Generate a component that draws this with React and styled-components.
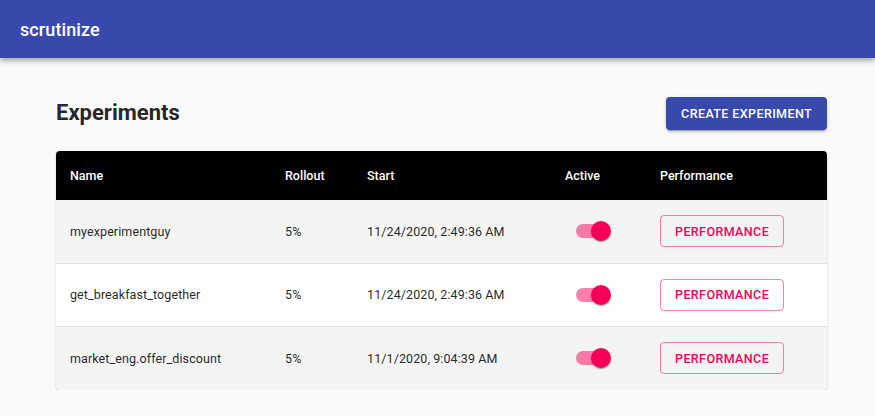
import React from 'react';
import styled, { createGlobalStyle } from 'styled-components';

const GlobalStyle = createGlobalStyle`
  body {
    margin: 0;
    background: #fafafa;
    font-family: Roboto, "Liberation Sans", sans-serif;
    color: rgba(0, 0, 0, 0.87);
  }
`;

const AppBar = styled.header`
  height: 58px;
  background: #3949ab;
  color: #fff;
  display: flex;
  align-items: center;
  padding: 0 20px;
  box-shadow: 0 2px 4px -1px rgba(0,0,0,0.2), 0 4px 5px 0 rgba(0,0,0,0.14), 0 1px 10px 0 rgba(0,0,0,0.12);
  position: relative;
  z-index: 1;
`;

const Brand = styled.div`
  font-size: 18px;
  font-weight: 500;
  letter-spacing: 0.1px;
  padding-top: 1px;
`;

const Main = styled.main`
  width: 771px;
  margin-left: 56px;
  padding-top: 39px;
`;

const TitleRow = styled.div`
  display: flex;
  justify-content: space-between;
  align-items: center;
  margin-bottom: 21px;
`;

const Title = styled.h1`
  margin: 0 0 2px;
  font-size: 22px;
  font-weight: 700;
  color: rgba(0,0,0,0.87);
`;

const Primary = styled.button`
  height: 33px;
  padding: 0 15px;
  border: none;
  border-radius: 4px;
  background: #3949ab;
  color: #fff;
  font-family: inherit;
  font-size: 12.5px;
  font-weight: 500;
  letter-spacing: 0.4px;
  text-transform: uppercase;
  box-shadow: 0 3px 1px -2px rgba(0,0,0,0.2), 0 2px 2px 0 rgba(0,0,0,0.14), 0 1px 5px 0 rgba(0,0,0,0.12);
`;

const Paper = styled.div`
  border-radius: 4px;
  overflow: hidden;
  background: #fff;
  box-shadow: 0 2px 1px -1px rgba(0,0,0,0.2), 0 1px 1px 0 rgba(0,0,0,0.14), 0 1px 3px 0 rgba(0,0,0,0.12);
`;

const Table = styled.table`
  width: 100%;
  border-collapse: collapse;
  table-layout: fixed;
`;

const Head = styled.th`
  background: #000;
  color: #fff;
  height: 49px;
  padding: 0 14px;
  text-align: left;
  font-size: 12.5px;
  font-weight: 500;
`;

const Row = styled.tr`
  background: ${p => (p.$striped ? '#f4f4f4' : '#fff')};
  border-bottom: 1px solid #e0e0e0;
  &:last-child { border-bottom: none; }
`;

const Cell = styled.td`
  height: 62.5px;
  padding: 0 14px;
  font-size: 12.5px;
  letter-spacing: 0.1px;
`;

const SwitchRoot = styled.span`
  display: inline-flex;
  align-items: center;
  position: relative;
  width: 34px;
  height: 20px;
  margin-left: 11px;
  vertical-align: middle;
`;

const Track = styled.span`
  width: 34px;
  height: 14px;
  border-radius: 7px;
  background: #f50057;
  opacity: 0.5;
`;

const Thumb = styled.span`
  position: absolute;
  right: -1px;
  top: 0;
  width: 20px;
  height: 20px;
  border-radius: 50%;
  background: #f50057;
  box-shadow: 0 2px 1px -1px rgba(0,0,0,0.2), 0 1px 1px 0 rgba(0,0,0,0.14), 0 1px 3px 0 rgba(0,0,0,0.12);
`;

const Outlined = styled.button`
  height: 32px;
  padding: 0 14px;
  background: transparent;
  border: 1px solid rgba(245, 0, 87, 0.5);
  border-radius: 4px;
  color: #f50057;
  font-family: inherit;
  font-size: 12.5px;
  font-weight: 500;
  letter-spacing: 0.4px;
  text-transform: uppercase;
`;

const experiments = [
  { name: 'myexperimentguy', rollout: '5%', start: '11/24/2020, 2:49:36 AM' },
  { name: 'get_breakfast_together', rollout: '5%', start: '11/24/2020, 2:49:36 AM' },
  { name: 'market_eng.offer_discount', rollout: '5%', start: '11/1/2020, 9:04:39 AM' },
];

function Switch() {
  return (
    <SwitchRoot>
      <Track />
      <Thumb />
    </SwitchRoot>
  );
}

export default function App() {
  return (
    <>
      <GlobalStyle />
      <AppBar>
        <Brand>scrutinize</Brand>
      </AppBar>
      <Main>
        <TitleRow>
          <Title>Experiments</Title>
          <Primary>Create Experiment</Primary>
        </TitleRow>
        <Paper>
          <Table>
            <colgroup>
              <col style={{ width: 215 }} />
              <col style={{ width: 82 }} />
              <col style={{ width: 198 }} />
              <col style={{ width: 95 }} />
              <col style={{ width: 181 }} />
            </colgroup>
            <thead>
              <tr>
                <Head>Name</Head>
                <Head>Rollout</Head>
                <Head>Start</Head>
                <Head>Active</Head>
                <Head>Performance</Head>
              </tr>
            </thead>
            <tbody>
              {experiments.map((e, i) => (
                <Row key={e.name} $striped={i % 2 === 0}>
                  <Cell>{e.name}</Cell>
                  <Cell>{e.rollout}</Cell>
                  <Cell>{e.start}</Cell>
                  <Cell><Switch /></Cell>
                  <Cell><Outlined>Performance</Outlined></Cell>
                </Row>
              ))}
            </tbody>
          </Table>
        </Paper>
      </Main>
    </>
  );
}
